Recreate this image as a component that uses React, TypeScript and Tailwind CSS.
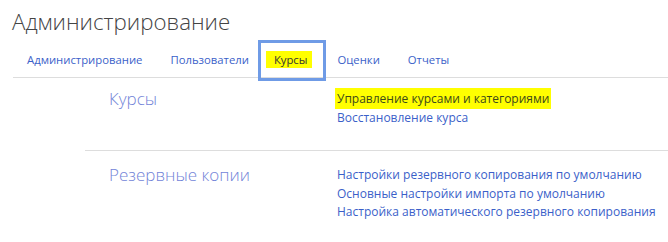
const TABS = ['Администрирование', 'Пользователи', 'Курсы', 'Оценки', 'Отчеты']

const SECTIONS = [
  {
    title: 'Курсы',
    links: ['Управление курсами и категориями', 'Восстановление курса'],
  },
  {
    title: 'Резервные копии',
    links: [
      'Настройки резервного копирования по умолчанию',
      'Основные настройки импорта по умолчанию',
      'Настройка автоматического резервного копирования',
    ],
  },
]

export default function App() {
  return (
    <div className="w-[668px] h-[242px] overflow-hidden bg-white font-['Open_Sans','Noto_Sans',sans-serif]">
      <h1 className="pl-[12px] pt-[7px] text-[22.3px] leading-[30px] font-light text-[#444]">
        Администрирование
      </h1>

      {/* tabs */}
      <nav className="ml-[13px] mt-[6px] flex border-b border-[#dddddd] text-[11.3px] leading-[18px] text-[#3b5fc9]">
        {TABS.map((tab) =>
          tab === 'Курсы' ? (
            <a key={tab} href="#" className="relative ml-[-3px] pl-[6px] pr-[11px] pt-[8px] pb-[8px] text-[#333]">
              <span className="bg-[#ffff00] pl-[8px] pr-[5px] py-[1px]">{tab}</span>
              <span className="absolute left-[-2px] top-[-3px] right-[-3px] bottom-[-4px] border-[3px] border-[#6f9be6]" />
            </a>
          ) : (
            <a key={tab} href="#" className="px-[14px] pt-[8px] pb-[8px]">
              {tab}
            </a>
          )
        )}
      </nav>

      {/* sections */}
      <div className="ml-[85px]">
        {SECTIONS.map((s, i) => (
          <div
            key={s.title}
            className={`flex pl-[24px] ${i === 0 ? 'pt-[10px] pb-[23px] border-b border-[#dddddd]' : 'pt-[13px]'}`}
          >
            <h2 className="w-[228px] text-[17px] leading-[22px] font-light text-[#7284d8]">{s.title}</h2>
            <ul className={`flex flex-col text-[12px] leading-[18.5px] text-[#3b5fc9] ${i === 0 ? 'pt-[2px]' : 'pt-[2px]'}`}>
              {s.links.map((l, j) => (
                <li key={l}>
                  {i === 0 && j === 0 ? (
                    <a href="#" className="bg-[#ffff00] text-[#3d4a1a] ml-[-2px] pl-[2px] pr-[2px] py-[2px]">{l}</a>
                  ) : (
                    <a href="#">{l}</a>
                  )}
                </li>
              ))}
            </ul>
          </div>
        ))}
      </div>
    </div>
  )
}
